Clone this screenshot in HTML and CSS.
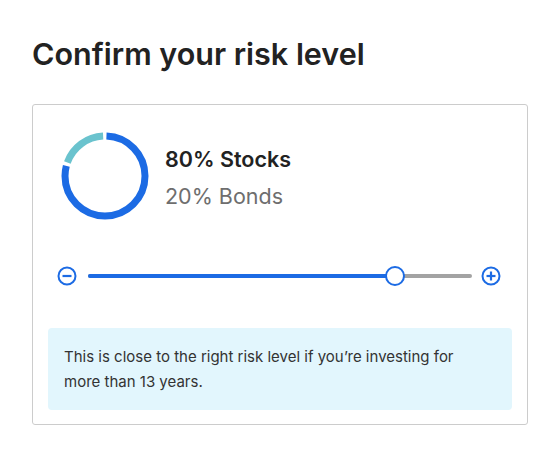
FILE: index.html
```html
<!DOCTYPE html>
<html lang="en">
<head>
    <meta charset="UTF-8">
    <meta name="viewport" content="width=device-width, initial-scale=1.0">
    <title>Confirm your risk level</title>
    <link rel="stylesheet" href="styles.css">
</head>
<body>
    <h1 class="title">Confirm your risk level</h1>

    <div class="card">
        <div class="mix">
            <svg class="donut" width="88" height="88" viewBox="0 0 88 88">
                <!-- stocks 80%, bonds 20%, starting at 12 o'clock -->
                <circle cx="44" cy="44" r="40" fill="none" stroke="#1c6be4" stroke-width="7"
                        stroke-dasharray="197 54" stroke-dashoffset="-1.5" transform="rotate(-90 44 44)"/>
                <circle cx="44" cy="44" r="40" fill="none" stroke="#6ac3ce" stroke-width="7"
                        stroke-dasharray="47 204" stroke-dashoffset="-202" transform="rotate(-90 44 44)"/>
            </svg>
            <div class="mix-text">
                <div class="stocks">80% Stocks</div>
                <div class="bonds">20% Bonds</div>
            </div>
        </div>

        <div class="slider">
            <svg class="step" width="20" height="20" viewBox="0 0 20 20">
                <circle cx="10" cy="10" r="8.5" fill="none" stroke="#1c6be4" stroke-width="2"/>
                <line x1="5.5" y1="10" x2="14.5" y2="10" stroke="#1c6be4" stroke-width="2.2"/>
            </svg>
            <div class="track">
                <div class="fill" style="width: 80%"></div>
                <div class="thumb" style="left: 80%"></div>
            </div>
            <svg class="step" width="20" height="20" viewBox="0 0 20 20">
                <circle cx="10" cy="10" r="8.5" fill="none" stroke="#1c6be4" stroke-width="2"/>
                <line x1="5.5" y1="10" x2="14.5" y2="10" stroke="#1c6be4" stroke-width="2.2"/>
                <line x1="10" y1="5.5" x2="10" y2="14.5" stroke="#1c6be4" stroke-width="2.2"/>
            </svg>
        </div>

        <div class="note">
            This is close to the right risk level if you’re investing for more than 13 years.
        </div>
    </div>
</body>
</html>
```

FILE: styles.css
```css
body {
    font-family: Inter, "Liberation Sans", Arial, sans-serif;
    background-color: #fff;
    color: #222;
    margin: 0;
    padding: 34px 32px 0 32px;
}

.title {
    font-size: 30.5px;
    font-weight: 600;
    margin: 0 0 30px 0;
    line-height: 40px;
    color: #222;
}

.card {
    width: 496px;
    border: 1px solid #ccc;
    border-radius: 3px;
    padding: 27px 15px 14px 15px;
    box-sizing: border-box;
}

.mix {
    display: flex;
    align-items: center;
    padding-left: 13px;
}

.donut {
    display: block;
}

.mix-text {
    margin-left: 16px;
    padding-top: 4px;
    font-size: 21.5px;
    line-height: 37px;
}

.stocks {
    font-weight: 600;
    color: #222;
}

.bonds {
    color: #6e6e6e;
}

.slider {
    display: flex;
    align-items: center;
    margin: 46px 11px 0 9px;
}

.step {
    display: block;
    flex: none;
}

.track {
    position: relative;
    flex: 1;
    height: 4px;
    margin: 0 9px 0 11px;
    border-radius: 2px;
    background-color: #a3a3a3;
}

.fill {
    height: 100%;
    border-radius: 2px;
    background-color: #1c6be4;
}

.thumb {
    position: absolute;
    top: 50%;
    width: 20px;
    height: 20px;
    margin: -10px 0 0 -10px;
    box-sizing: border-box;
    border: 2px solid #1c6be4;
    border-radius: 50%;
    background-color: #fff;
}

.note {
    margin-top: 42px;
    padding: 16px 30px 16px 16px;
    background-color: #e2f6fd;
    border-radius: 4px;
    font-size: 15px;
    line-height: 25px;
    color: #333;
}
```
